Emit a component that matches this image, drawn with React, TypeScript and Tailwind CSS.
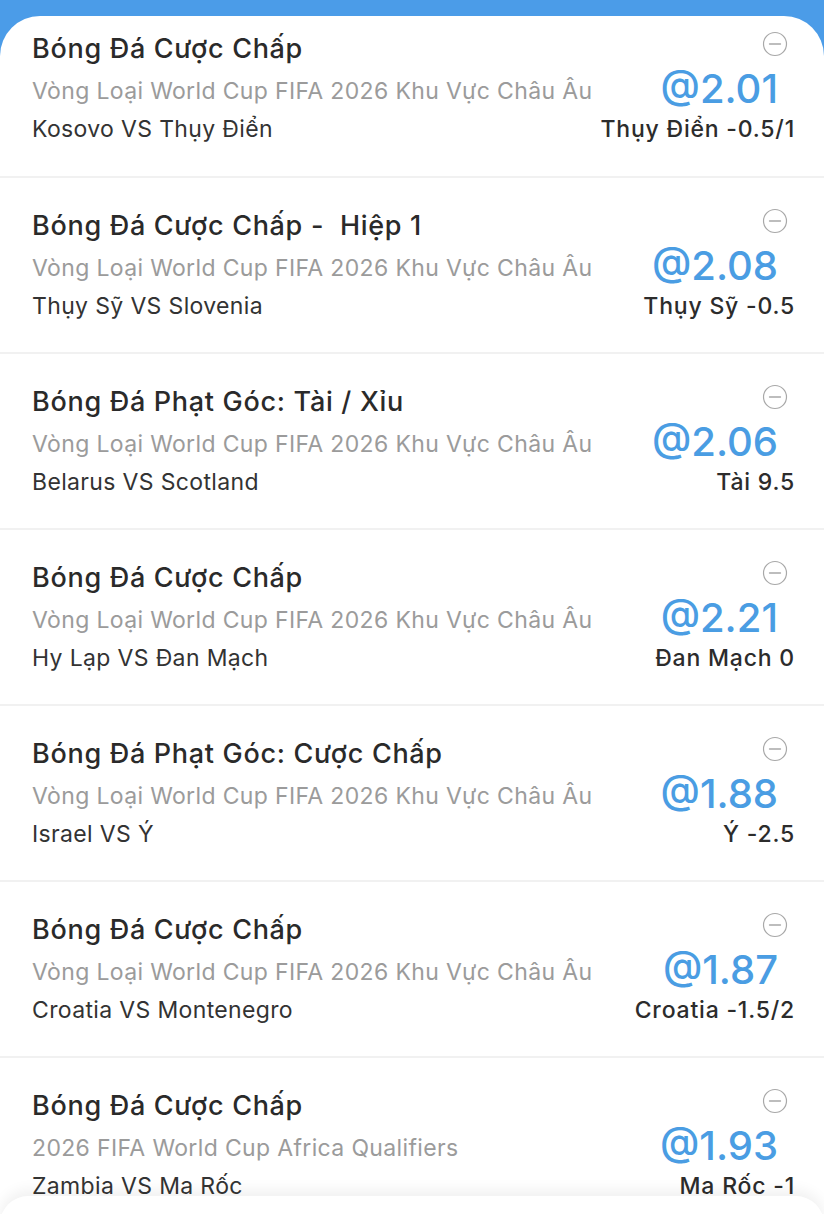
import { FC } from "react";

type Bet = {
  title: string;
  league: string;
  match: string;
  odds: string;
  pick: string;
};

const bets: Array<Bet> = [
  { title: "Bóng Đá Cược Chấp", league: "Vòng Loại World Cup FIFA 2026 Khu Vực Châu Âu", match: "Kosovo VS Thụy Điển", odds: "@2.01", pick: "Thụy Điển -0.5/1" },
  { title: "Bóng Đá Cược Chấp -  Hiệp 1", league: "Vòng Loại World Cup FIFA 2026 Khu Vực Châu Âu", match: "Thụy Sỹ VS Slovenia", odds: "@2.08", pick: "Thụy Sỹ -0.5" },
  { title: "Bóng Đá Phạt Góc: Tài / Xỉu", league: "Vòng Loại World Cup FIFA 2026 Khu Vực Châu Âu", match: "Belarus VS Scotland", odds: "@2.06", pick: "Tài 9.5" },
  { title: "Bóng Đá Cược Chấp", league: "Vòng Loại World Cup FIFA 2026 Khu Vực Châu Âu", match: "Hy Lạp VS Đan Mạch", odds: "@2.21", pick: "Đan Mạch 0" },
  { title: "Bóng Đá Phạt Góc: Cược Chấp", league: "Vòng Loại World Cup FIFA 2026 Khu Vực Châu Âu", match: "Israel VS Ý", odds: "@1.88", pick: "Ý -2.5" },
  { title: "Bóng Đá Cược Chấp", league: "Vòng Loại World Cup FIFA 2026 Khu Vực Châu Âu", match: "Croatia VS Montenegro", odds: "@1.87", pick: "Croatia -1.5/2" },
  { title: "Bóng Đá Cược Chấp", league: "2026 FIFA World Cup Africa Qualifiers", match: "Zambia VS Ma Rốc", odds: "@1.93", pick: "Ma Rốc -1" },
];

const RemoveIcon = () => (
  <svg width="26" height="26" viewBox="0 0 26 26" fill="none">
    <circle cx="13" cy="13" r="11.5" stroke="#a8a8a8" strokeWidth="1.2" />
    <line x1="7.5" y1="13" x2="18.5" y2="13" stroke="#a8a8a8" strokeWidth="1.3" strokeLinecap="round" />
  </svg>
);

const BetRow: FC<{ bet: Bet; first: boolean }> = ({ bet, first }) => (
  <div className={`flex justify-between pl-8 pr-[29px] ${first ? "h-[160px] pt-[15px]" : "h-[174px] pt-[30px]"}`}>
    <div className="flex flex-col">
      <p className="whitespace-pre text-[27px] leading-[36px] tracking-[0.7px] font-medium text-[#2a2a2a]">{bet.title}</p>
      <p className="mt-[5px] text-[23px] leading-[38px] tracking-[0.35px] text-[#9b9b9b]">{bet.league}</p>
      <p className="text-[23px] leading-[38px] tracking-[0.35px] text-[#333333]">{bet.match}</p>
    </div>
    <div className="flex flex-col items-end">
      <div className="-mt-[2px] mr-[7px] h-[30px] flex items-center">
        <RemoveIcon />
      </div>
      <p className="mt-[8px] mr-[17px] text-[40px] leading-[44px] font-medium text-[#4a9de3]">{bet.odds}</p>
      <p className="mt-[1px] text-[23px] leading-[34px] tracking-[0.8px] font-medium text-[#2c2c2c]">{bet.pick}</p>
    </div>
  </div>
);

export default function App() {
  return (
    <div className="relative w-[824px] h-[1214px] overflow-hidden bg-[#4b9ce8]" style={{ fontFamily: "Inter, 'Noto Sans', sans-serif" }}>
      <div className="mt-4 bg-white rounded-t-[40px] h-[1300px]">
        {bets.map((bet, i) => (
          <div key={i}>
            {i > 0 && <div className="h-[2px] bg-[#f1f1f1]" />}
            <BetRow bet={bet} first={i === 0} />
          </div>
        ))}
      </div>
      <div className="absolute left-0 right-0 top-[1196px] h-[40px] bg-white rounded-t-[28px] shadow-[0_-6px_14px_rgba(0,0,0,0.06)]" />
    </div>
  );
}
